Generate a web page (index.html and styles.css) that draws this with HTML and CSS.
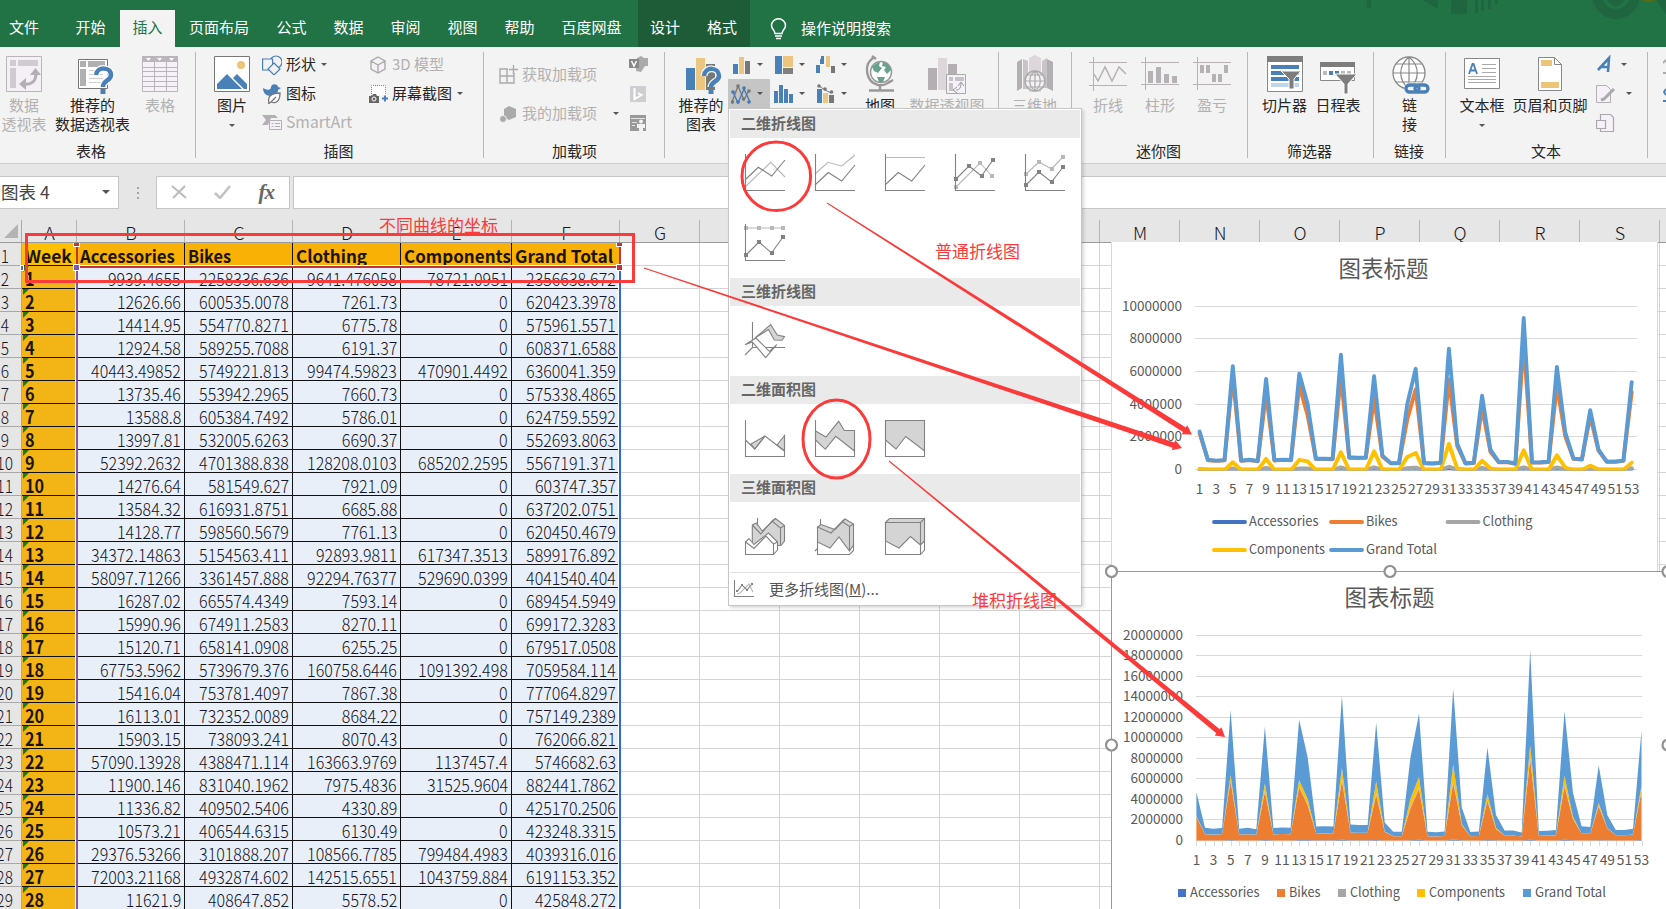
FILE: index.html
```html
<!DOCTYPE html>
<html lang="zh-CN">
<head>
<meta charset="utf-8">
<title>Excel</title>
<link rel="stylesheet" href="styles.css">
</head>
<body>
<header class="tabs">
  <span class="tab first">文件</span><span class="tab w57">开始</span><span class="tab active">插入</span><span class="tab w84">页面布局</span><span class="tab w57">公式</span><span class="tab w57">数据</span><span class="tab w57">审阅</span><span class="tab w57">视图</span><span class="tab w57">帮助</span><span class="tab w87">百度网盘</span>
  <span class="context"><span>设计</span><span>格式</span></span>
  <span class="tell"><svg width="17" height="22" viewBox="0 0 17 22" fill="none" stroke="#fff" stroke-width="1.5"><path d="M5 15.500C5 12 1.500 11.500 1.500 7.500a7 6.800 0 0 1 14 0C15.500 11.500 12 12 12 15.500zM5 18h7M6 20.500h5"/></svg>操作说明搜索</span>
  <svg class="decor" width="300" height="24" viewBox="1366 0 300 24" fill="#1f6640"><path d="M1367 0h4v8h-4zM1422 0h16v9zM1451 0h16v14h-16zM1475 0h3v13h-3zM1481 0h3v11h-3zM1488 0h3v9h-3zM1495 0h3v4h-3zM1656 0h10v14z"/><circle cx="1616" cy="-5" r="19" fill="none" stroke="#1f6640" stroke-width="10"/><circle cx="1616" cy="-3" r="9"/><path d="M1642 0h14l-4 2h-7z" fill="#5a6a10"/></svg>
</header>

<section class="ribbon">
  <div class="group g1">
    <div class="body">
      <div class="big off" style="width:48px"><svg class="ic" viewBox="0 0 38 38"><path d="M1.500 .5h35v35h-35z" fill="#f4f0f6" stroke="#b9b5ba"/><path d="M5 4h6v6H5zM13 4h20v6H13zM5 12h6v20H5z" fill="#cfcbd0"/><path d="M19 28c8 1 12-3 12-11" fill="none" stroke="#b3afb5" stroke-width="3"/><path d="M14 28l7-6v12zM25 19h11l-5.500-7z" fill="#b3afb5"/></svg><p>数据<br>透视表</p></div>
      <div class="big" style="width:89px"><svg class="ic" viewBox="0 0 38 38"><path d="M4.500 3.500h29v29h-29z" fill="#fff" stroke="#777"/><path d="M6 5h6v6H6zM14 5h17v6H14zM6 13h6v17H6z" fill="#b0b0b0"/><path d="M15 14.500h14M15 18.500h14M15 22.500h14M15 26.500h14" stroke="#ccc"/><path d="M22 19c1-9 15-8 15 0 0 6-8 5-8 12" fill="none" stroke="#fff" stroke-width="7"/><path d="M22 19c1-9 15-8 15 0 0 6-8 5-8 12" fill="none" stroke="#4a80b8" stroke-width="4.500"/><path d="M26.500 33h5v5h-5z" fill="#4a80b8"/></svg><p>推荐的<br>数据透视表</p></div>
      <div class="big off" style="width:46px"><svg class="ic" viewBox="0 0 38 38"><path d="M1.500 .5h35v35h-35z" fill="#f6f1f8" stroke="#b9b5ba"/><path d="M1 0h36v6H1z" fill="#b9b5ba"/><path d="M1 11.500h36M1 15.500h36M1 20.500h36M1 25.500h36M1 30.500h36M13.500 6v30M25.500 6v30" stroke="#b9b5ba"/><path d="M5 2h5l-2.500 3zM16 2h5l-2.500 3zM28 2h5l-2.500 3z" fill="#fff"/></svg><p>表格</p></div>
    </div><div class="name" style="width:182px">表格</div>
  </div>
  <div class="group g2">
    <div class="body">
      <div class="big" style="width:66px;padding-left:6px"><svg class="ic" viewBox="0 0 38 38"><path d="M1.500 .5h35v35h-35z" fill="#fff" stroke="#777"/><circle cx="28" cy="9" r="4" fill="#ecc577"/><path d="M4 33v-5l10-10 15 15zM20 22l4-4 10 10v5h-3z" fill="#4a80b8"/></svg><p>图片</p><i class="arr below"></i></div>
      <div class="col" style="width:107px">
        <div class="row"><svg width="20" height="20" viewBox="0 0 20 20" fill="#f3f3f3" stroke="#4a80b8" stroke-width="1.200"><circle cx="14" cy="7" r="6"/><path d="M.6 4h10v11H.6z"/><path d="M12 8l6 6-6 6-6-6z"/></svg><span>形状</span><i class="arr"></i></div>
        <div class="row"><svg width="20" height="20" viewBox="0 0 20 20"><path d="M1 4c5 3 8 2 8-1 1-4 7-3 7 0l3 1-3 2c0 5-4 6-7 6C4 12 1 9 1 4z" fill="#4a80b8"/><path d="M7 19c-2-7 3-10 11-10 0 8-4 11-9 9l5-5M9 18l-3 2" fill="#fff" stroke="#777" stroke-width="1.300"/></svg><span>图标</span></div>
        <div class="row off"><svg width="20" height="20" viewBox="0 0 20 20"><path d="M0 2h13l3 3H9l-3 7H0l4-5z" fill="#b3afb5"/><path d="M7.500 7.500h12v9h-12z" fill="#f6f1f8" stroke="#b3afb5"/><path d="M9.500 10.500h2M13 10.500h5M9.500 13.500h2M13 13.500h5" stroke="#b3afb5"/></svg><span class="latin">SmartArt</span></div>
      </div>
      <div class="col">
        <div class="row off"><svg width="19" height="20" viewBox="0 0 19 20" fill="#f6f1f8" stroke="#aaa" stroke-width="1.400"><path d="M9 2l7 4v8l-7 4-7-4V6zM2 6l7 4 7-4M9 10v8"/></svg><span>3D 模型</span></div>
        <div class="row"><svg width="19" height="20" viewBox="0 0 19 20"><path d="M2.500 12V1.500h14V11" fill="#fff" stroke="#888" stroke-dasharray="1 1"/><path d="M0 12h3l1-2h3l1 2h2v7H0z" fill="#666"/><circle cx="5" cy="15" r="2" fill="none" stroke="#fff"/><path d="M13 14.500h6M16 11.500v6" stroke="#4a80b8" stroke-width="2"/></svg><span>屏幕截图</span><i class="arr"></i></div>
      </div>
    </div><div class="name" style="padding-right:3px">插图</div>
  </div>
  <div class="group g3">
    <div class="body">
      <div class="addins">
        <div class="row off"><svg width="20" height="22" viewBox="0 0 20 22" fill="none" stroke="#aaa" stroke-width="1.400"><path d="M1 5h14v14H1zM8 5v14M1 12h14"/><path d="M9 0h8v9H9z" fill="#f3f3f3" stroke="none"/><path d="M10 5.500h9M14.500 1v9"/></svg><span>获取加载项</span></div>
        <div class="row off"><svg width="20" height="22" viewBox="0 0 20 22" fill="#aaa"><path d="M10 3l7 3v8l-7 3-5-3V6z"/><circle cx="4" cy="16" r="3.500" stroke="#f3f3f3"/></svg><span>我的加载项</span><i class="arr"></i></div>
      </div>
      <div class="col">
        <div class="row"><svg width="19" height="18" viewBox="0 0 19 18"><path d="M8 2l4-2 3 2h4v8h-3l-4 6-5-1V9z" fill="#aaa"/><path d="M0 3h10v9H0z" fill="#888"/><path d="M2.500 5l2.500 5 2.500-5" fill="none" stroke="#fff" stroke-width="1.500"/></svg></div>
        <div class="row"><svg width="19" height="18" viewBox="0 0 19 18"><path d="M1 1h16v16H1z" fill="#d0cdd2"/><path d="M5.500 3v11l7-4-3.500-2" fill="none" stroke="#fff" stroke-width="2"/></svg></div>
        <div class="row"><svg width="19" height="18" viewBox="0 0 19 18"><path d="M1 1h16v16H1z" fill="#999"/><path d="M2 4.500h14M3 8.500h5M3 11.500h3" stroke="#e4e4e4"/><circle cx="12" cy="7.500" r="2" fill="#f3f3f3"/><path d="M8 10h8v4h-2v3h-4v-3H8z" fill="#f3f3f3"/></svg></div>
      </div>
    </div><div class="name">加载项</div>
  </div>
  <div class="group g4">
    <div class="body">
      <div class="big" style="width:54px;margin-left:9px"><svg class="ic" viewBox="0 0 38 38"><path d="M4 12h9v22H4z" fill="#4a80b8"/><path d="M14 2h9v32h-9z" fill="#ecc680"/><path d="M24 8h9v26h-9z" fill="#777"/><path d="M22 20c1-10 15-9 15 0 0 6-8 5-8 11" fill="none" stroke="#f3f3f3" stroke-width="7"/><path d="M22 20c1-10 15-9 15 0 0 6-8 5-8 11" fill="none" stroke="#4a80b8" stroke-width="4.500"/><path d="M26.500 33h5v5h-5z" fill="#4a80b8"/></svg><p>推荐的<br>图表</p></div>
      <div class="minis">
        <div class="mini"><svg width="20" height="20" viewBox="0 0 20 20"><path d="M2 9h5v10H2z" fill="#4a80b8"/><path d="M8 2h5v17H8z" fill="#ecc680"/><path d="M14 6h5v13h-5z" fill="#777"/></svg><i class="arr"></i></div>
        <div class="mini"><svg width="20" height="20" viewBox="0 0 20 20"><path d="M2 1h7v18H2z" fill="#4a80b8"/><path d="M10 1h10v11H10z" fill="#ecc680"/><path d="M10 13h10v6H10z" fill="#808080"/></svg><i class="arr"></i></div>
        <div class="mini"><svg width="20" height="20" viewBox="0 0 20 20"><path d="M1 10h4v8H1zM6 1h3v8H5V4h1z" fill="#4a80b8"/><path d="M11 1h4v11h-4z" fill="#ecc680"/><path d="M16 11h4v7h-4z" fill="#777"/></svg><i class="arr"></i></div>
        <div class="mini sel"><svg width="20" height="20" viewBox="0 0 20 20"><g fill="none" stroke="#777" stroke-width="1.300"><path d="M1 18L7 2l6 14 5-10"/></g><path d="M2 8l5 11 6-14 6 13" fill="none" stroke="#3f78b5" stroke-width="1.300"/><g fill="#3f78b5"><circle cx="2" cy="8" r="1.800"/><circle cx="7" cy="18" r="1.800"/><circle cx="13" cy="4" r="1.800"/><circle cx="18" cy="18" r="1.800"/></g><g fill="#777"><circle cx="1.500" cy="18" r="1.800"/><circle cx="7" cy="2" r="1.800"/><circle cx="12.500" cy="15" r="1.800"/><circle cx="18" cy="7" r="1.800"/></g></svg><i class="arr"></i></div>
        <div class="mini"><svg width="20" height="20" viewBox="0 0 20 20" fill="#4a80b8"><path d="M1 7h4v12H1zM6 1h4v18H6zM11 5h4v14h-4zM16 10h4v9h-4z"/></svg><i class="arr"></i></div>
        <div class="mini"><svg width="20" height="20" viewBox="0 0 20 20"><path d="M2 5h5v14H2z" fill="#4a80b8"/><path d="M8 9h5v10H8z" fill="#ecc680"/><path d="M14 11h5v8h-5z" fill="#777"/><path d="M4 2l6 4 6 3" fill="none" stroke="#777"/><g fill="#777"><circle cx="4" cy="2" r="1.800"/><circle cx="10" cy="5" r="1.800"/><circle cx="16.500" cy="8" r="1.800"/></g></svg><i class="arr"></i></div>
      </div>
      <div class="big" style="width:56px"><svg class="ic" viewBox="0 0 38 38"><circle cx="20" cy="16" r="10.500" fill="#fff" stroke="#999" stroke-width="1.500"/><path d="M11 11c3-3 5-4 8-5l-1 4 3 2-4 5-4-2zM22 6c4 0 7 4 8 8l-4 4-3-4 2-3-4-1zM16 21h8l-2 5h-4z" fill="#65a38f"/><path d="M12 2C2 9 5 26 17 29c5 1 9-1 12-4M11 0l4 3M27 27l5-3M19 29v5M8 34.500h25" fill="none" stroke="#999" stroke-width="2.400"/></svg><p>地图</p></div>
      <div class="big off" style="width:78px"><svg class="ic" viewBox="0 0 38 38"><path d="M0 12h9v22H0z" fill="#b3afb3"/><path d="M10 2h9v32h-9z" fill="#ddd6db"/><path d="M20 8h9v12h-9z" fill="#b3afb3"/><path d="M18.500 18.500h19v19h-19z" fill="#f6f1f8" stroke="#aaa"/><path d="M21 21h4v4h-4zM27 21h9v4h-9zM21 27h4v8h-4z" fill="#c6c2c7"/><path d="M28 34c4 0 5-3 5-7m-8 7l4-3m-4 3l4 3m1-7l3-4 3 4" fill="none" stroke="#999"/></svg><p>数据透视图</p></div>
    </div>
  </div>
  <div class="group g5">
    <div class="body"><div class="big off" style="width:71px"><svg class="ic" viewBox="0 0 38 38"><g fill="#b3afb3"><path d="M1 6l5-3v29l-5 3zM31 3l6 3v29l-6-3z"/><path d="M7 3l5 2v28H7zM26 5l5-3v30h-5z" fill="#c9c4ca"/></g><path d="M13 2l6-3 6 3v34H13z" fill="#ddd6db"/><circle cx="19" cy="25" r="10" fill="#f4f1f4" stroke="#aaa" stroke-width="1.500"/><path d="M9 25h20M11 19h16M11 31h16M19 15v20M19 15c-7 5-7 15 0 20 7-5 7-15 0-20" fill="none" stroke="#aaa" stroke-width="1.200"/></svg><p>三维地</p></div></div>
  </div>
  <div class="group g6">
    <div class="body">
      <div class="big off w52"><svg class="ic" viewBox="0 0 38 38" fill="none" stroke="#b5b1b5"><path d="M0 6.500h38M0 29.500h38M4.500 1v34"/><path d="M5 18l4 7 7-14 7 14 7-14 7 7" stroke-width="1.500"/></svg><p>折线</p></div>
      <div class="big off w52"><svg class="ic" viewBox="0 0 38 38" fill="none" stroke="#b5b1b5"><path d="M0 6.500h38M0 28.500h38M4.500 1v33"/><path d="M7 15h5v12H7zM15 11h5v16h-5zM23 18h5v9h-5zM31 20h5v7h-5z" fill="#b5b1b5" stroke="none"/></svg><p>柱形</p></div>
      <div class="big off w52"><svg class="ic" viewBox="0 0 38 38" fill="none" stroke="#b5b1b5"><path d="M0 6.500h38M0 28.500h38M4.500 1v33"/><path d="M7 9h4v8H7zM13 9h4v8h-4zM31 9h4v8h-4zM19 18h4v8h-4zM25 18h4v8h-4z" fill="#b5b1b5" stroke="none"/></svg><p>盈亏</p></div>
    </div><div class="name">迷你图</div>
  </div>
  <div class="group g7">
    <div class="body">
      <div class="big" style="width:53px;margin-left:10px"><svg class="ic" viewBox="0 0 38 38"><path d="M1.500 .5h35v35h-35z" fill="#fff" stroke="#888"/><path d="M1 0h36v6H1z" fill="#7d7d7d"/><path d="M5 9h28v4H5zM5 15h28v4H5zM5 21h28v4H5z" fill="#4a80b8"/><path d="M5 27h28v4H5z" fill="#c3d5e8"/><path d="M15 15h20l-7 8v10h-5V23z" fill="#7d7d7d" stroke="#fff"/></svg><p>切片器</p></div>
      <div class="big" style="width:54px"><svg class="ic" viewBox="0 0 38 38"><path d="M1.500 6.500h34v18h-34z" fill="#fff" stroke="#888"/><path d="M1 6h35v5H1z" fill="#7d7d7d"/><path d="M4 15h4v4H4zM22 15h4v4h-4zM28 15h4v4h-4z" fill="#bbb"/><path d="M10 15h4v4h-4zM16 15h4v4h-4z" fill="#4a80b8"/><path d="M16 18h22l-9 10v10h-4V28z" fill="#7d7d7d" stroke="#fff"/></svg><p>日程表</p></div>
    </div><div class="name" style="padding-right:3px">筛选器</div>
  </div>
  <div class="group g8">
    <div class="body"><div class="big" style="width:71px"><svg class="ic" viewBox="0 0 38 38"><circle cx="18" cy="17" r="16" fill="#fff" stroke="#888" stroke-width="1.300"/><path d="M2 17h32M5 8h26M5 26h26M18 1v32M18 1c-11 9-11 23 0 32 11-9 11-23 0-32" fill="none" stroke="#888" stroke-width="1.200"/><rect x="15" y="28" width="22" height="9" rx="4" fill="#f3f3f3" stroke="#f3f3f3" stroke-width="3"/><g fill="none" stroke-width="3.300" stroke="#4a80b8"><rect x="15" y="29" width="13" height="7" rx="3.500"/><rect x="24" y="29" width="13" height="7" rx="3.500"/></g></svg><p>链<br>接</p></div></div><div class="name" style="padding-right:2px">链接</div>
  </div>
  <div class="group g9">
    <div class="body">
      <div class="big" style="width:56px;margin-left:8px"><svg class="ic" viewBox="0 0 38 38"><path d="M1.500 2.500h35v30h-35z" fill="#fff" stroke="#888"/><path d="M19 8.500h14M19 12.500h14M19 16.500h14M5 20.500h28M5 23.500h28M5 26.500h28" stroke="#aaa"/><path d="M6 18l3.500-10h1L14 18M7 14.500h6" fill="none" stroke="#4a80b8" stroke-width="1.800"/></svg><p>文本框</p><i class="arr below"></i></div>
      <div class="big" style="width:80px"><svg class="ic" viewBox="0 0 38 38"><path d="M7.500 1.500h16l7 7v26h-23z" fill="#fff" stroke="#888"/><path d="M23.500 1.500v7h7" fill="none" stroke="#888"/><path d="M10 4h11v6H10zM10 26h18v6H10z" fill="#ecc577"/></svg><p>页眉和页脚</p></div>
      <div class="col" style="margin-left:6px">
        <div class="row"><svg width="20" height="20" viewBox="0 0 20 20"><path d="M2 15L13 3l-1 14M6 12h7" fill="none" stroke="#4a80b8" stroke-width="2.600"/></svg><i class="arr"></i></div>
        <div class="row"><svg width="20" height="20" viewBox="0 0 20 20"><path d="M.5 1.500h10l4 4v13H.5z" fill="#f6f1f8" stroke="#b3afb5"/><path d="M18 5L8 15l-3 1" fill="none" stroke="#aaa" stroke-width="3"/></svg><i class="arr far"></i></div>
        <div class="row"><svg width="20" height="20" viewBox="0 0 20 20" fill="#f6f1f8" stroke="#aaa6ac" stroke-width="1.200"><path d="M4.500 1.500h10l3 3v14h-13z"/><path d="M.5 7.500h9v8h-9z"/></svg></div>
      </div>
    </div><div class="name" style="padding-right:2px">文本</div>
  </div>
  <div class="group g10"><svg width="3" height="50" viewBox="0 0 3 50"><path d="M3 4L0 7M3 17H0" stroke="#aaa" stroke-width="2"/><path d="M3 33L1 36l2 3M0 45h3" fill="none" stroke="#4a80b8" stroke-width="2"/></svg></div>
</section>

<section class="formula">
  <div class="namebox"><span>图表 4</span><i class="arr dd"></i></div>
  <div class="dots"><b></b><b></b><b></b></div>
  <div class="fx"><svg width="16" height="14" viewBox="0 0 16 14"><path d="M1 1l14 12M14 1L2 13" stroke="#bbb" stroke-width="2"/></svg><svg width="17" height="14" viewBox="0 0 17 14"><path d="M1 8l5 5L16 1" fill="none" stroke="#c2c2c2" stroke-width="2.600"/></svg><em>fx</em></div>
  <div class="input"></div>
</section>

<main class="sheet">
  <div class="grid" id="grid"></div>
  <div class="range categories"></div>
  <div class="range names"></div>
  <div class="range values"></div>
  <i class="knob violet k1"></i><i class="knob violet k2"></i><i class="knob red k3"></i><i class="knob red k4"></i><i class="knob red k5"></i>
  <svg class="chart one" id="lineChart" width="547" height="329" viewBox="1111 242 547 329"></svg>
  <svg class="chart two" id="areaChart" width="561" height="344" viewBox="1105 565 561 344"></svg>
</main>

<aside class="menu">
  <h3>二维折线图</h3>
  <div class="tiles">
    <svg viewBox="0 0 40 40"><path class="l" d="M0 34L25.700 9.300 40 24"/><path d="M0 27l13.300-12.700L26.700 23 40 7M.5 1v36.500H40"/></svg>
    <svg viewBox="0 0 40 40"><path class="l" d="M0 21L13 9.300 26.700 13 40 2"/><path d="M0 32l13.300-12.500L26.700 28 40 12M.5 1v36.500H40"/></svg>
    <svg viewBox="0 0 40 40"><path class="l" d="M0 4.500h40"/><path d="M0 32l13.300-12.500L26.700 28 40 12M.5 1v36.500H40"/></svg>
    <svg viewBox="0 0 40 40"><path class="l" d="M1 34L25 10 37 23"/><path class="ml" d="M-1 32h4v4h-4zM23 8h4v4h-4zM35 21h4v4h-4z"/><path d="M1 26l13-13 12.500 10L38 7M.5 1v36.500H40"/><path class="md" d="M-1 24h4v4h-4zM12 11h4v4h-4zM25 21h4v4h-4zM36 5h4v4h-4z"/></svg>
    <svg viewBox="0 0 40 40"><path class="l" d="M1 21L14 9l12.500 7L38 4"/><path class="ml" d="M-1 19h4v4h-4zM12 7h4v4h-4zM25 14h4v4h-4zM36 2h4v4h-4z"/><path d="M1 32l13-13 12.500 10L38 14M.5 1v36.500H40"/><path class="md" d="M-1 30h4v4h-4zM12 17h4v4h-4zM25 27h4v4h-4zM36 12h4v4h-4z"/></svg>
    <svg viewBox="0 0 40 40"><path class="l" d="M1 5h37"/><path class="ml" d="M-1 3h4v4h-4zM12 3h4v4h-4zM25 3h4v4h-4zM36 3h4v4h-4z"/><path d="M1 32l13-13 12.500 11L38 14M.5 1v36.500H40"/><path class="md" d="M-1 30h4v4h-4zM12 17h4v4h-4zM25 28h4v4h-4zM36 12h4v4h-4z"/></svg>
  </div>
  <h3>三维折线图</h3>
  <div class="tiles">
    <svg viewBox="0 0 40 40"><path d="M7.500 1v25.500H40M7.500 26.500L0 34"/><path class="g" d="M10 17L25.700 3.700 32.300 14l7.200 1.700L37 19.300l-7.700-.3L23.500 8.500z"/><path class="w" d="M0 23.700L11 17l13.300 13.300 7.400-6.600-11 13L7.300 21z"/></svg>
  </div>
  <h3>二维面积图</h3>
  <div class="tiles">
    <svg viewBox="0 0 40 40"><path class="g" d="M6 25l14-8-10.300 13zM32 26l7.500-9.500V32z"/><path d="M.5 1v36.500h39V16M.5 21l9.200 9L20 17l19.500 15"/></svg>
    <svg viewBox="0 0 40 40"><path class="g" d="M.5 12L11 18 23.700 2.300l5.600 9.200h10.200V32L20.700 17.300l-10.400 13L.5 21z"/><path d="M.5 1v36.500h39V30"/></svg>
    <svg viewBox="0 0 40 40"><path class="g" d="M.5 1.500h39V32L20.700 17.500 11 30 .5 21z"/><path d="M.5 1.500v36h39V30"/></svg>
  </div>
  <h3>三维面积图</h3>
  <div class="tiles">
    <svg viewBox="0 0 40 40"><path d="M12.500 1v8"/><path class="g" d="M7.300 8l4-2 6 8L30.500 1.500l9 7V24L36 28.500H7.300z"/><path d="M7.300 8l8.500 9L27 4l8.500 7v17M35.500 11l4-2.500M27 4l3.500-2.500"/><path class="w" d="M.5 37.500V25L4 21.500l5 6 14.500-11.500 9 9v8L28.500 37.500z"/><path d="M.5 25l8.500 6.500L21 19l7.500 8v10.500M28.500 27l4-2"/></svg>
    <svg viewBox="0 0 40 40"><path d="M5.500 2v6M0 34l3-3"/><path class="g" d="M2.500 10L6 7.500l14 5 10-10.500 8.500 5V28L34.500 34 24 20 15 31 2.500 25z"/><path d="M2.500 10L16 16 27 4.500l7.500 5v24M34.500 9.500l4-2.500M27 4.500L30 2M2.500 25v12.500h32l4-4V25"/></svg>
    <svg viewBox="0 0 40 40"><path class="g" d="M.5 5.500l4-4h35V24l-4 4-10-8.500L14 31 .5 24z"/><path d="M.5 5.500h35v32H.5zM35.500 5.500l4-4V33l-4 4.500"/></svg>
  </div>
  <div class="more"><svg width="20" height="18" viewBox="0 0 20 18"><path class="l" d="M3 14l3-1L15 4l4 8"/><path d="M.5 0v16.500H20M3 12l5-7 5 5 5-6"/><path class="md" d="M2 10h2v2H2zM7 4h2v2H7zM12 9h2v2h-2zM17 3h2v2h-2z"/></svg><span>更多折线图(<u>M</u>)...</span></div>
</aside>

<svg class="notes" id="notes" width="1666" height="909" viewBox="0 0 1666 909">
  <path d="M26.500 234.500h607v47h-607z"/>
  <ellipse cx="776.300" cy="176.300" rx="34.300" ry="34.300"/>
  <ellipse cx="836.500" cy="439" rx="33.500" ry="39"/>
  <text x="379" y="232">不同曲线的坐标</text>
  <text x="935" y="258">普通折线图</text>
  <text x="972" y="607">堆积折线图</text>
</svg>
<script src="script.js"></script>
</body>
</html>
```
FILE: styles.css
```css
* { box-sizing: border-box; }
body { margin: 0; width: 1666px; height: 909px; overflow: hidden; position: relative; display: flex; flex-direction: column; background: #fff; font: 15px/19px "Noto Sans CJK SC", "Noto Sans", sans-serif; color: #262626; }
p, h3 { margin: 0; }

.tabs { position: relative; flex: none; height: 47px; display: flex; background: #217346; color: #fff; line-height: 35px; }
.tab { flex: none; padding-top: 9px; text-align: center; }
.w57 { width: 57px; }
.first { width: 62px; padding-right: 14px; }
.w84 { width: 88px; }
.w87 { width: 87px; }
.tab.active { width: 55px; margin: 10px 0 0 1px; padding: 0; line-height: 33px; background: #f3f3f3; color: #217346; }
.context { flex: none; width: 112px; margin-left: 3px; padding: 9px 0 0 12px; display: flex; gap: 27px; background: #1e5c38; }
.tell { padding: 10px 0 0 20px; display: flex; align-items: flex-start; gap: 14px; }
.tell svg { margin-top: 8px; }
.decor { position: absolute; right: 0; top: 0; }

.ribbon { flex: none; height: 117px; display: flex; background: #f3f3f3; border-bottom: 1px solid #d0d0d0; overflow: hidden; }
.group { position: relative; flex: none; height: 111px; display: flex; flex-direction: column; background: linear-gradient(#b8b8b8, #b8b8b8) right 5px / 1px 106px no-repeat; }
.g1 { width: 196px; } .g2 { width: 288px; } .g3 { width: 181px; } .g4 { width: 334px; } .g5 { width: 73px; }
.g6 { width: 176px; } .g7 { width: 126px; } .g8 { width: 72px; } .g9 { width: 202px; } .g10 { width: 18px; padding: 9px 0 0 15px; background: none; }
.body { flex: none; height: 95px; display: flex; align-items: flex-start; white-space: nowrap; }
.name { text-align: center; line-height: 18px; }
.big { flex: none; padding-top: 9px; display: flex; flex-direction: column; align-items: center; text-align: center; }
.big .ic { width: 38px; height: 38px; margin-bottom: 1px; overflow: visible; }
.big p { margin: 0 -20px; }
.w52 { width: 52px; }
.g6 .big:first-child { margin-left: 10px; }
.g6 .name { padding-right: 3px; }
.off { color: #b1b1b1; }
.arr { flex: none; width: 0; height: 0; border: 3px solid transparent; border-top-color: #555; border-bottom: 0; }
.below { margin-top: 10px; }
.col { padding-top: 3px; }
.row { height: 29px; display: flex; align-items: center; gap: 4px; }
.row svg { flex: none; }
.row span { padding-bottom: 2px; }
.row .arr { margin-left: 1px; }
.g2 .latin { font-size: 15.700px; }
.g9 .row .arr { margin-left: 1px; }
.g9 .row .far { margin-left: 6px; }
.addins { width: 145px; padding: 8px 0 0 15px; }
.addins .row { height: 39px; gap: 3px; }
.addins .arr { margin-left: 13px; }
.minis { width: 124px; padding-top: 3px; display: grid; grid-template-columns: repeat(3, 42px); grid-auto-rows: 29px; }
.mini { display: flex; align-items: center; padding-left: 3px; gap: 6px; }
.mini.sel { background: #c5c5c5; }

.formula { flex: none; height: 56px; padding: 12px 0 11px; display: flex; background: #e6e6e6; }
.namebox { width: 119px; padding: 0 8px 2px 1px; display: flex; align-items: center; justify-content: space-between; font-size: 17.500px; background: #fff; border: solid #c6c6c6; border-width: 1px 1px 1px 0; color: #444; }
.namebox .dd { border-width: 4px 4px 0; }
.dots { width: 37px; display: flex; flex-direction: column; align-items: center; justify-content: center; gap: 3px; }
.dots b { width: 2px; height: 2px; background: #a6a6a6; }
.fx { width: 134px; margin-right: 3px; padding: 0 15px 2px 14px; display: flex; align-items: center; justify-content: space-between; background: #fff; border: 1px solid #c6c6c6; }
.fx em { font: italic bold 21px/24px "Liberation Serif", serif; color: #666; letter-spacing: -1px; }
.input { flex: 1; background: #fff; border: 1px solid #c6c6c6; border-right: 0; }

.sheet { position: relative; flex: 1; overflow: hidden; }
.grid { width: 1760px; margin-top: -1px; font-size: 18px; font-weight: 300; line-height: 24px; color: #151525; }
.heads { display: flex; height: 24px; background: #e6e6e6; border-bottom: 1px solid #9b9b9b; }
.heads div { flex: none; padding-left: 1px; border-right: 1px solid #b4b4b4; text-align: center; line-height: 26px; }
.heads .corner { border-right-color: #aaa; padding: 5px 0 0 4px; }
.corner i { display: block; border: solid transparent; border-width: 0 0 14px 14px; border-bottom-color: #b4b4b4; width: 0; }
.line { display: flex; height: 23px; }
.line > div { flex: none; border: solid #d4d4d4; border-width: 0 1px 1px 0; white-space: nowrap; overflow: visible; }
.line > .rh { background: #e6e6e6; border-color: #a8a8a8; display: flex; justify-content: center; }
.rh span { margin: 0 6px 0 -6px; transform: scaleX(.86); }
.line > .wk { position: relative; padding-left: 3px; font-weight: bold; background: #f3b516; border-color: #111; color: #1c1400; }
.wk span { display: inline-block; transform: scaleX(.9); transform-origin: left; }
.wk::before { content: ""; position: absolute; left: 1px; top: 0; border: solid transparent; border-width: 6px 6px 0 0; border-top-color: #1a7a1a; }
.line > .num { padding-right: 3px; text-align: right; background: #e8eff9; border-color: #111; }
.num span { display: inline-block; transform: scaleX(.89); transform-origin: right; margin-left: -20px; }
.line > .hd { padding-left: 3px; font-weight: bold; background: #f9b106; border-color: #111; color: #1c1400; }
.line > .hd.week { background: #ffc000; }
.hd span { display: inline-block; transform-origin: left; font-size: 17.500px; }

.range { position: absolute; }
.categories { left: 75px; top: 47px; width: 3px; height: 642px; background: #7e57b5; border-left: 1px solid #fff; }
.names { left: 76px; top: 24px; width: 545px; height: 24px; border: solid #c0343c; border-width: 0 2px 2px 2px; box-shadow: inset 0 -1px #fff; }
.values { left: 618px; top: 48px; width: 3px; height: 642px; border-left: 1px solid #fff; background: #2f6ac6; }
.knob { position: absolute; width: 7px; height: 7px; border: 1px solid #fff; }
.violet { background: #7e57b5; }
.red { background: #c0343c; }
.k1 { left: 73px; top: 44px; }
.k2 { left: 20px; top: 45px; width: 4px; height: 6px; }
.k3 { left: 616px; top: 44px; }
.k4 { left: 73px; top: 23px; height: 4px; border-top: 0; }
.k5 { left: 616px; top: 23px; height: 4px; border-top: 0; }
.chart { position: absolute; font-size: 13.600px; fill: #595959; }
.chart.one { left: 1111px; top: 22px; }
.chart.two { left: 1105px; top: 345px; }
.chart .title { font-size: 22.500px; }

.menu { position: absolute; left: 728px; top: 108px; width: 354px; height: 498px; padding: 1px; background: #fff; border: 1px solid #c6c6c6; box-shadow: 2px 2px 3px rgba(0,0,0,.15); color: #555; }
.menu h3 { height: 28px; padding-left: 11px; font-size: 15px; line-height: 25px; color: #666; background: #eaeaea; }
.tiles { display: flex; flex-wrap: wrap; }
.tiles svg { width: 40px; height: 40px; margin: 15px; }
.menu svg { overflow: visible; fill: none; stroke: #828282; stroke-width: 1.100; }
.menu .l { stroke: #b8b8b8; }
.menu .ml { fill: #b8b8b8; stroke: none; }
.menu .md { fill: #828282; stroke: none; }
.menu .g { fill: #d4d4d4; }
.menu .w { fill: #fff; }
.more { display: flex; align-items: center; gap: 15px; height: 33px; padding-left: 4px; border-top: 1px solid #e1e1e1; }
.more span { padding-bottom: 2px; }

.notes { position: absolute; left: 0; top: 0; fill: none; stroke: #fd3a3a; stroke-width: 3; pointer-events: none; }
.notes text, .notes .arrow { fill: #fd3a3a; stroke: none; font-size: 17px; }
```
FILE: script.js
```js
const headers = ['Accessories', 'Bikes', 'Clothing', 'Components', 'Grand Total'];
const headerWidths = [95, 43, 71, 107, 98];
const rows = `9939.4655 2258336.636 9641.476058 78721.0951 2356638.672
12626.66 600535.0078 7261.73 0 620423.3978
14414.95 554770.8271 6775.78 0 575961.5571
12924.58 589255.7088 6191.37 0 608371.6588
40443.49852 5749221.813 99474.59823 470901.4492 6360041.359
13735.46 553942.2965 7660.73 0 575338.4865
13588.8 605384.7492 5786.01 0 624759.5592
13997.81 532005.6263 6690.37 0 552693.8063
52392.2632 4701388.838 128208.0103 685202.2595 5567191.371
14276.64 581549.627 7921.09 0 603747.357
13584.32 616931.8751 6685.88 0 637202.0751
14128.77 598560.5679 7761.13 0 620450.4679
34372.14863 5154563.411 92893.9811 617347.3513 5899176.892
58097.71266 3361457.888 92294.76377 529690.0399 4041540.404
16287.02 665574.4349 7593.14 0 689454.5949
15990.96 674911.2583 8270.11 0 699172.3283
15120.71 658141.0908 6255.25 0 679517.0508
67753.5962 5739679.376 160758.6446 1091392.498 7059584.114
15416.04 753781.4097 7867.38 0 777064.8297
16113.01 732352.0089 8684.22 0 757149.2389
15903.15 738093.241 8070.43 0 762066.821
57090.13928 4388471.114 163663.9769 1137457.4 5746682.63
11900.146 831040.1962 7975.4836 31525.9604 882441.7862
11336.82 409502.5406 4330.89 0 425170.2506
10573.21 406544.6315 6130.49 0 423248.3315
29376.53266 3101888.207 108566.7785 799484.4983 4039316.016
72003.21168 4932874.602 142515.6551 1043759.884 6191153.352
11621.9 408647.852 5578.52 0 425848.272`.split('\n').map(r => r.split(' '));
const later = [
  [10, 390, 5, 0], [10, 430, 5, 0], [100, 5520, 200, 1600], [20, 1470, 30, 90], [10, 400, 5, 0], [10, 430, 5, 0],
  [60, 3800, 120, 570], [15, 1120, 20, 90], [10, 470, 5, 0], [10, 480, 5, 0], [10, 380, 5, 0], [80, 7850, 160, 1210],
  [10, 450, 5, 0], [10, 460, 5, 0], [10, 490, 5, 0], [70, 5180, 160, 900], [30, 2080, 50, 150], [10, 680, 5, 0],
  [10, 640, 5, 0], [30, 3300, 60, 270], [15, 1180, 20, 30], [10, 500, 5, 0], [10, 500, 5, 0], [10, 560, 5, 0], [60, 4760, 110, 450]
].map(r => [...r, r.reduce((a, b) => a + b)].map(v => v * 1000));
const series = rows.map(r => r.map(Number)).concat(later);

const widths = [22, 55, 108, 108, 108, 111, 108, ...Array(14).fill(80)];
const cell = (cls, w, text = '') => `<div class="${cls}" style="width:${w}px">${text === '' ? '' : `<span>${text}</span>`}</div>`;
let html = '<div class="heads"><div class="corner" style="width:22px"><i></i></div>' +
  widths.slice(1).map((w, i) => `<div style="width:${w}px">${i < 19 ? String.fromCharCode(65 + i) : ''}</div>`).join('') + '</div>';
for (let n = 1; n < 30; n++) {
  html += '<div class="line">' + cell('rh', 22, n);
  html += n === 1 ? cell('hd week', 55, 'Week') : cell('wk', 55, n - 1);
  for (let c = 0; c < 5; c++) html += n === 1 ? cell('hd', widths[c + 2], headers[c]) : cell('num', widths[c + 2], rows[n - 2][c]);
  html += widths.slice(7).map(w => cell('', w)).join('') + '</div>';
}
document.getElementById('grid').innerHTML = html;
document.querySelectorAll('.hd span').forEach((s, i) => {
  s.style.transform = `scaleX(${[47, ...headerWidths][i] / s.offsetWidth})`;
});

const colors = ['#4472c4', '#ed7d31', '#a5a5a5', '#ffc000', '#5b9bd5'];
const text = (x, y, s, anchor = 'start', extra = '') => `<text x="${x}" y="${y}" text-anchor="${anchor}" ${extra}>${s}</text>`;
const fit = w => `textLength="${w}" lengthAdjust="spacingAndGlyphs"`;
const axisLabels = (x, y, v) => text(x, y, v, 'end', fit(String(v).length * 7.5));
const nameWidths = [69.5, 31.5, 50, 76, 71];

function lineChart() {
  const x0 = 1195.5, y0 = 470, k = 163.4 / 1e7;
  let s = '<path d="M1111 242h547v329h-547z" fill="#fff"/><path d="M1111.500 242v329M1657.500 242v329" stroke="#d9d9d9"/>';
  s += text(1383.5, 277, '图表标题', 'middle', 'class="title"');
  for (let v = 0; v <= 10; v += 2) {
    const y = Math.round(y0 - v * 1e6 * k) - .5;
    s += `<path d="M1195 ${y}h442" stroke="#d9d9d9"/>` + axisLabels(1182, y + 4.8, v * 1e6);
  }
  colors.forEach((c, j) => {
    const pts = series.map((r, i) => `${(x0 + 4.1 + i * 8.31).toFixed(1)},${(y0 - r[j] * k).toFixed(1)}`).join(' ');
    s += `<polyline points="${pts}" fill="none" stroke="${c}" stroke-width="3.900" stroke-linejoin="round" stroke-linecap="round" clip-path="url(#plot)"/>`;
  });
  for (let i = 1; i <= 53; i += 2) s += text(x0 + 4.1 + (i - 1) * 8.31, 493.5, i, 'middle', fit(i < 10 ? 7.5 : 15.3));
  [[1212, 522], [1329, 522], [1445.5, 522], [1212, 550], [1329, 550]].forEach(([x, y], i) => {
    s += `<path d="M${x + 2} ${y}h31" stroke="${colors[i]}" stroke-width="3.900" stroke-linecap="round"/>` + text(x + 37, y + 4.2, headers[i], 'start', fit(nameWidths[i]));
  });
  document.getElementById('lineChart').innerHTML = '<clipPath id="plot"><path d="M1190 250h460v220.500h-460z"/></clipPath>' + s;
}

function areaChart() {
  const x0 = 1196.4, y0 = 840.5, k = 205 / 2e7, step = 8.56;
  let s = '<path d="M1111.500 571.500h580v360h-580z" fill="#fff" stroke="#999"/>';
  s += text(1389.5, 606, '图表标题', 'middle', 'class="title"');
  for (let v = 0; v <= 20; v += 2) {
    const y = Math.round(y0 - v * 1e6 * k) - .5;
    s += `<path d="M1196 ${y}h446" stroke="#d9d9d9"/>` + axisLabels(1183, y + 4.8, v * 1e6);
  }
  let base = series.map(() => 0);
  colors.forEach((c, j) => {
    const top = base.map((b, i) => b + series[i][j]);
    const p = (v, i) => `${(x0 + i * step).toFixed(1)},${(y0 - v * k).toFixed(1)}`;
    s += `<polygon points="${top.map(p).join(' ')} ${base.map(p).reverse().join(' ')}" fill="${c}"/>`;
    base = top;
  });
  for (let i = 0; i < 53; i++) s += `<path d="M${Math.round(x0 + i * step) + .5} 841v5" stroke="#d9d9d9"/>`;
  for (let i = 1; i <= 53; i += 2) s += text(x0 + (i - 1) * step, 864.5, i, 'middle', fit(i < 10 ? 7.5 : 15.3));
  [1178, 1277, 1338, 1417, 1523].forEach((x, i) => {
    s += `<path d="M${x} 889h8v8h-8z" fill="${colors[i]}"/>` + text(x + 12, 897, headers[i], 'start', fit(nameWidths[i]));
  });
  [[1111.5, 571.5], [1390, 571.5], [1668, 571.5], [1111.5, 745], [1668, 745]].forEach(([x, y]) => {
    s += `<circle cx="${x}" cy="${y}" r="5.500" fill="#fff" stroke="#929292" stroke-width="2.200"/>`;
  });
  document.getElementById('areaChart').innerHTML = s;
}

function arrow(x1, y1, x2, y2) {
  const len = Math.hypot(x2 - x1, y2 - y1), a = Math.atan2(y2 - y1, x2 - x1) * 180 / Math.PI;
  return `<path class="arrow" transform="translate(${x1} ${y1}) rotate(${a})" d="M0-.5L${len - 9}-2.700v-2.600L${len} 0l-9 5.300v-2.600L0 .5z"/>`;
}

lineChart();
areaChart();
document.getElementById('notes').innerHTML += arrow(827, 203, 1192, 434.5) + arrow(644, 268, 1182, 448) + arrow(889, 461, 1225, 737);
```
